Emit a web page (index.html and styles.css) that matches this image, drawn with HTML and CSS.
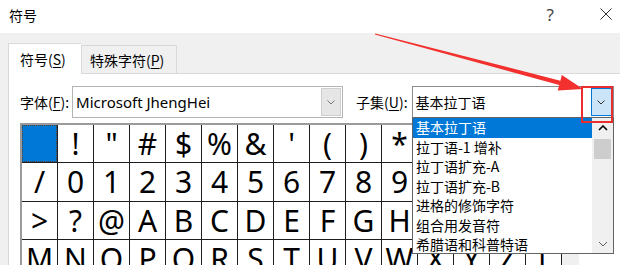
FILE: index.html
```html
<!DOCTYPE html>
<html lang="zh-CN">
  <head>
    <meta charset="UTF-8" />
    <title>符号</title>
    <link rel="stylesheet" href="styles.css">
  </head>
  <body>
    <div class="window">
      <div class="titlebar">
        <span class="title">符号</span>
        <span class="help">?</span>
        <svg class="close" viewBox="0 0 12 12"><path d="M0.5 0.5 L11.5 11.5 M11.5 0.5 L0.5 11.5" stroke="#333" stroke-width="1" fill="none"/></svg>
      </div>
      <div class="dialog">
        <div class="tabs">
          <div class="tab active">符号(<u>S</u>)</div>
          <div class="tab other">特殊字符(<u>P</u>)</div>
        </div>
        <div class="panel">
          <div class="font-row">
            <label class="label">字体(<u>F</u>):</label>
            <div class="combo font-combo">
              <span class="value latin">Microsoft JhengHei</span>
              <span class="drop">
                <svg viewBox="0 0 8 5"><path d="M0.5 0.5 L4 4 L7.5 0.5" stroke="#777" fill="none"/></svg>
              </span>
            </div>
            <label class="label subset-label">子集(<u>U</u>):</label>
            <div class="combo subset-combo">
              <span class="value">基本拉丁语</span>
              <span class="drop focus">
                <svg viewBox="0 0 8 5"><path d="M0.5 0.5 L4 4 L7.5 0.5" stroke="#333" fill="none"/></svg>
              </span>
            </div>
          </div>
          <div class="grid-frame">
            <div class="grid">
              <div class="cell selected"></div><div class="cell">!</div><div class="cell">"</div><div class="cell">#</div><div class="cell">$</div><div class="cell">%</div><div class="cell">&amp;</div><div class="cell">'</div><div class="cell">(</div><div class="cell">)</div><div class="cell">*</div><div class="cell">+</div><div class="cell">,</div><div class="cell">-</div><div class="cell">.</div>
              <div class="cell">/</div><div class="cell">0</div><div class="cell">1</div><div class="cell">2</div><div class="cell">3</div><div class="cell">4</div><div class="cell">5</div><div class="cell">6</div><div class="cell">7</div><div class="cell">8</div><div class="cell">9</div><div class="cell">:</div><div class="cell">;</div><div class="cell">&lt;</div><div class="cell">=</div>
              <div class="cell">&gt;</div><div class="cell">?</div><div class="cell">@</div><div class="cell">A</div><div class="cell">B</div><div class="cell">C</div><div class="cell">D</div><div class="cell">E</div><div class="cell">F</div><div class="cell">G</div><div class="cell">H</div><div class="cell">I</div><div class="cell">J</div><div class="cell">K</div><div class="cell">L</div>
              <div class="cell">M</div><div class="cell">N</div><div class="cell">O</div><div class="cell">P</div><div class="cell">Q</div><div class="cell">R</div><div class="cell">S</div><div class="cell">T</div><div class="cell">U</div><div class="cell">V</div><div class="cell">W</div><div class="cell">X</div><div class="cell">Y</div><div class="cell">Z</div><div class="cell">[</div>
            </div>
            <div class="grid-scroll"></div>
          </div>
        </div>
      </div>

      <!-- 展开的子集下拉列表 -->
      <div class="subset-list">
        <ul class="items">
          <li class="on">基本拉丁语</li>
          <li>拉丁语-1 增补</li>
          <li>拉丁语扩充-A</li>
          <li>拉丁语扩充-B</li>
          <li>进格的修饰字符</li>
          <li>组合用发音符</li>
          <li>希腊语和科普特语</li>
        </ul>
        <div class="list-scroll">
          <span class="sb-btn">
            <svg viewBox="0 0 10 6"><path d="M1 5 L5 1 L9 5" stroke="#000" stroke-width="1.6" fill="none"/></svg>
          </span>
          <span class="thumb"></span>
          <span class="sb-btn down">
            <svg viewBox="0 0 10 6"><path d="M1 1 L5 5 L9 1" stroke="#606060" stroke-width="1" fill="none"/></svg>
          </span>
        </div>
      </div>

      <!-- 标注：红色箭头和方框 -->
      <svg class="annot" viewBox="0 0 620 265">
        <polygon points="375.15,33.42 560.36,80.73 561.85,75.12 583,89 557.75,90.6 559.24,84.99 374.85,34.58" fill="#f2302e"/>
        <rect x="582" y="87" width="30" height="35" fill="none" stroke="#ea2d2d" stroke-width="2"/>
      </svg>
    </div>
  </body>
</html>
```

FILE: styles.css
```css
* {
  margin: 0;
  padding: 0;
  box-sizing: border-box;
  list-style: none;
}
html,
body {
  width: 100%;
  height: 100%;
  overflow: hidden;
  background-color: #fff;
}
body {
  font-family: "Noto Sans", "Noto Sans CJK SC", sans-serif;
  font-size: 15px;
  color: #000;
}
u {
  text-decoration: underline;
  text-underline-offset: 2px;
}
.window {
  position: relative;
  width: 620px;
  height: 265px;
  overflow: hidden;
}
.titlebar {
  height: 33px;
  display: flex;
  align-items: center;
  padding: 0 8px 0 9px;
}
.title {
  font-family: "Noto Sans CJK SC", sans-serif;
  font-size: 14px;
  margin-top: -4px;
}
.help {
  margin-left: auto;
  margin-right: 46px;
  font-size: 17px;
  color: #444;
  margin-top: -4px;
}
.close {
  width: 12px;
  height: 12px;
  margin-top: -5px;
}
.dialog {
  background-color: #f0f0f0;
  height: 232px;
  padding-top: 10px;
}
.tabs {
  display: flex;
  align-items: flex-end;
  padding-left: 8px;
  height: 30px;
}
.tab {
  font-family: "Noto Sans CJK SC", sans-serif;
  font-size: 14px;
  height: 28px;
  display: flex;
  align-items: center;
  border: 1px solid #d9d9d9;
  border-bottom: none;
  background-color: #f0f0f0;
}
.tab.active {
  width: 73px;
  height: 31px;
  padding-left: 11px;
  background-color: #fff;
  margin-bottom: -1px;
  border-right: none;
  position: relative;
  z-index: 1;
}
.tab.other {
  width: 96px;
  padding-left: 8px;
}
.panel {
  margin-left: 8px;
  height: 200px;
  background-color: #fff;
  border-top: 1px solid #d9d9d9;
  border-left: 1px solid #d9d9d9;
  padding: 12px 0 0 11px;
}
.font-row {
  display: flex;
  align-items: center;
  height: 32px;
}
.label {
  font-family: "Noto Sans CJK SC", sans-serif;
  font-size: 14px;
  margin-right: 3px;
}
.subset-label {
  margin-left: 13px;
  margin-right: 4px;
}
.combo {
  height: 32px;
  display: flex;
  align-items: center;
  border: 1px solid #b4b4b4;
  background-color: #fff;
  padding-left: 3px;
}
.font-combo {
  width: 271px;
}
.subset-combo {
  width: 202px;
  border-color: #8c8c8c;
}
.value {
  font-family: "Noto Sans CJK SC", sans-serif;
  font-size: 14px;
}
.value.latin {
  font-family: "Noto Sans", sans-serif;
  font-size: 15px;
}
.drop {
  margin-left: auto;
  margin-right: 1px;
  width: 20px;
  height: 28px;
  display: flex;
  align-items: center;
  justify-content: center;
  background-color: #e6e6e6;
  border: 1px solid #cfcfcf;
}
.drop svg {
  width: 8px;
  height: 5px;
}
.drop.focus {
  width: 21px;
  background-color: #cce4f7;
  border-color: #0078d7;
}
.grid-frame {
  margin-top: 5px;
  display: flex;
  align-items: flex-start;
}
.grid {
  display: grid;
  grid-template-columns: repeat(15, 35px);
  grid-template-rows: 37px 38px 37px 38px;
  gap: 1px;
  background-color: #1e1e1e;
  border-top: 2px solid #9a9a9a;
  border-left: 2px solid #9a9a9a;
  border-right: 1px solid #1e1e1e;
}
.cell {
  background-color: #fff;
  display: flex;
  align-items: center;
  justify-content: center;
  font-family: "Noto Sans", sans-serif;
  font-size: 30px;
  line-height: 1;
}
.cell.selected {
  background-color: #0078d7;
  outline: 1px dotted #5b3a1e;
  outline-offset: -1px;
}
.grid-scroll {
  width: 17px;
  height: 160px;
  background-color: #f0f0f0;
}
.subset-list {
  position: absolute;
  left: 412px;
  top: 117px;
  width: 202px;
  height: 137px;
  border: 1px solid #646464;
  background-color: #fff;
  display: flex;
  z-index: 2;
}
.items {
  width: 179px;
}
.items li {
  height: 19.5px;
  line-height: 19.5px;
  padding-left: 3px;
  font-family: "Noto Sans CJK SC", sans-serif;
  font-size: 14px;
  white-space: nowrap;
}
.items li.on {
  background-color: #0078d7;
  color: #fff;
}
.list-scroll {
  width: 21px;
  background-color: #f0f0f0;
  display: flex;
  flex-direction: column;
  align-items: center;
}
.sb-btn {
  height: 19px;
  width: 100%;
  display: flex;
  align-items: center;
  justify-content: center;
}
.sb-btn svg {
  width: 10px;
  height: 6px;
}
.sb-btn.down {
  margin-top: auto;
  height: 18px;
}
.thumb {
  margin-top: 2px;
  width: 17px;
  height: 20px;
  background-color: #cdcdcd;
}
.annot {
  position: absolute;
  left: 0;
  top: 0;
  width: 620px;
  height: 265px;
  pointer-events: none;
  z-index: 3;
}
```
